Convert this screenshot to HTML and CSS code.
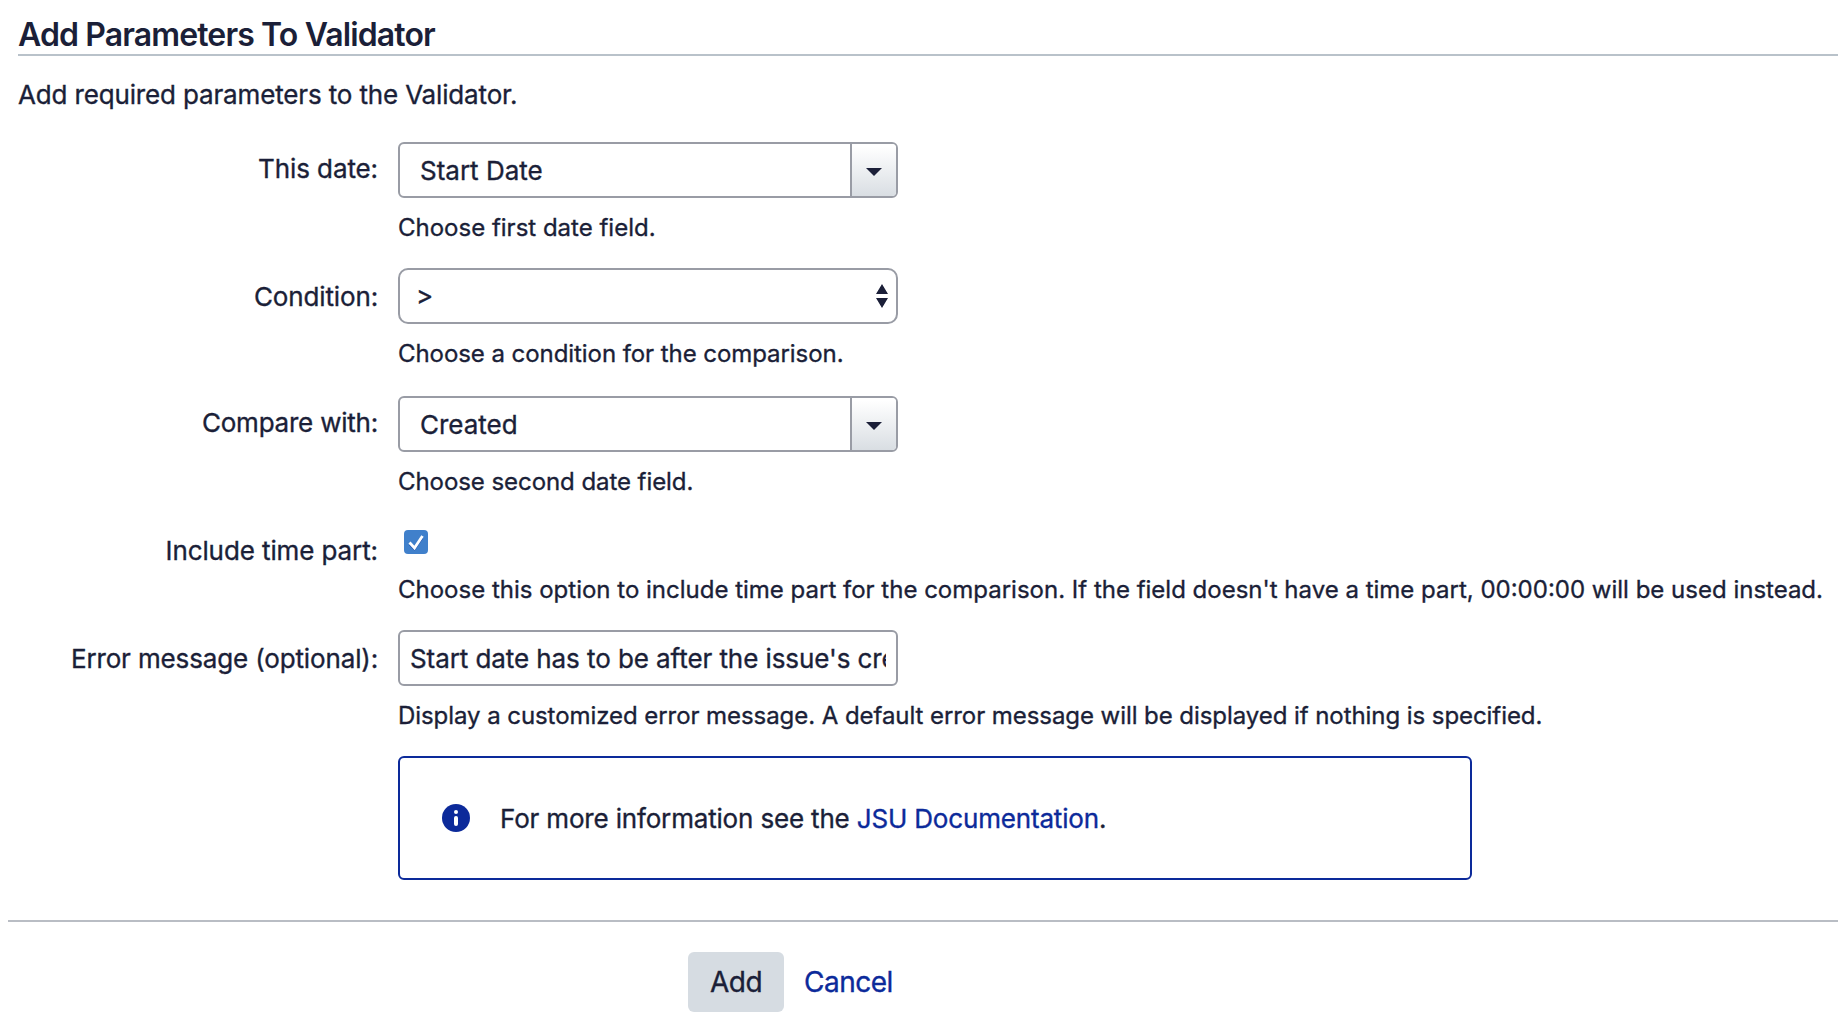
FILE: index.html
```html
<!DOCTYPE html>
<html lang="en">
<head>
<meta charset="utf-8">
<title>Add Parameters To Validator</title>
<link rel="stylesheet" href="styles.css">
</head>
<body>
<form class="page">
  <header class="intro">
    <h1 class="title">Add Parameters To Validator</h1>
    <p class="lead">Add required parameters to the Validator.</p>
  </header>

  <div class="row row-date">
    <div class="label">This date:</div>
    <div class="field">
      <div class="control combo">
        <span class="combo-value">Start Date</span>
        <span class="combo-button"><svg width="16" height="8" viewBox="0 0 16 8"><path d="M0 0h16L8 8z"/></svg></span>
      </div>
      <p class="hint">Choose first date field.</p>
    </div>
  </div>

  <div class="row row-condition">
    <div class="label label-low">Condition:</div>
    <div class="field">
      <div class="control select">
        <span>&gt;</span>
        <svg width="12" height="24" viewBox="0 0 12 24"><path d="M6 0l6 10H0zM0 14h12L6 24z"/></svg>
      </div>
      <p class="hint hint-tight">Choose a condition for the comparison.</p>
    </div>
  </div>

  <div class="row row-compare">
    <div class="label label-compare">Compare with:</div>
    <div class="field">
      <div class="control combo">
        <span class="combo-value">Created</span>
        <span class="combo-button"><svg width="16" height="8" viewBox="0 0 16 8"><path d="M0 0h16L8 8z"/></svg></span>
      </div>
      <p class="hint hint-tight">Choose second date field.</p>
    </div>
  </div>

  <div class="row row-time">
    <div class="label">Include time part:</div>
    <div class="field">
      <span class="checkbox"><svg width="24" height="24" viewBox="0 0 24 24"><path class="tick-shade" d="M5.500 14.500l5 5L18.500 8"/><path class="tick" d="M5.500 12.500l5 5.500L18.500 6"/></svg></span>
      <p class="hint">Choose this option to include time part for the comparison. If the field doesn't have a time part, 00:00:00 will be used instead.</p>
    </div>
  </div>

  <div class="row row-error">
    <div class="label label-low">Error message (optional):</div>
    <div class="field">
      <div class="control text-input"><span class="text-value">Start date has to be after the issue's creation date.</span></div>
      <p class="hint hint-tight">Display a customized error message. A default error message will be displayed if nothing is specified.</p>
    </div>
  </div>

  <div class="info">
    <svg width="28" height="28" viewBox="0 0 28 28"><circle class="info-disc" cx="14" cy="14" r="14"/><circle class="info-mark" cx="14" cy="8" r="2"/><rect class="info-mark" x="12" y="12" width="4" height="10" rx="2"/></svg>
    <p class="info-text">For more information see the <a class="link">JSU Documentation</a>.</p>
  </div>

  <footer class="actions">
    <span class="add">Add</span>
    <a class="cancel link">Cancel</a>
  </footer>
</form>
</body>
</html>
```
FILE: styles.css
```css
* { box-sizing: border-box; }

body {
  margin: 0;
  background: #fff;
  color: #1b1f38;
  font: 26px/36px Inter, "Liberation Sans", sans-serif;
  letter-spacing: -0.1px;
  -webkit-text-stroke: 0.35px currentColor;
  overflow: hidden;
}

h1, p { margin: 0; }
svg { display: block; flex: none; }

.page {
  display: flex;
  flex-direction: column;
  height: 1034px;
}

.intro { height: 142px; padding: 14px 0 0 18px; }

.title {
  height: 42px;
  border-bottom: 2px solid #b9c2ca;
  font-size: 32px;
  font-weight: 600;
  line-height: 42px;
  letter-spacing: -0.88px;
  -webkit-text-stroke: 0;
}

.lead { padding-top: 21px; letter-spacing: -0.15px; }

.row {
  display: grid;
  grid-template-columns: 378px 1fr;
  column-gap: 20px;
}

.row-date { height: 126px; }
.row-condition, .row-compare { height: 128px; }
.row-time { height: 106px; }
.row-error { height: 126px; }

.label { padding-top: 9px; text-align: right; }
.label-low { padding-top: 11px; letter-spacing: -0.14px; }
.label-compare { letter-spacing: -0.22px; }

.control {
  display: flex;
  align-items: center;
  width: 500px;
  height: 56px;
  border: 2px solid #999ca5;
  border-radius: 6px;
  overflow: hidden;
}

.combo-value { flex: 1; padding: 2px 0 0 20px; letter-spacing: 0; }

.combo-button {
  display: flex;
  align-items: center;
  justify-content: center;
  width: 46px;
  height: 52px;
  padding: 3px 0 0;
  border-left: 2px solid #999ca5;
  background: linear-gradient(#fff 5%, #d9dee3);
}

.combo-button svg, .select svg { fill: #1b1f38; }

.select {
  justify-content: space-between;
  padding: 0 8px 0 16px;
  border-radius: 10px;
}

.text-input { padding: 2px 10px 0; }
.text-value { overflow: hidden; white-space: nowrap; letter-spacing: -0.08px; }

.hint {
  padding-top: 15px;
  font-size: 24px;
  line-height: 30px;
  letter-spacing: 0;
  white-space: nowrap;
}

.hint-tight { letter-spacing: -0.065px; }

.checkbox {
  display: block;
  width: 24px;
  height: 24px;
  margin: 6px 0 6px 6px;
  border-radius: 4px;
  background: #4080cb;
}

.tick, .tick-shade { fill: none; stroke: #fff; stroke-width: 2.8; }
.tick-shade { stroke: #1d4da8; stroke-width: 1.5; }

.info {
  display: flex;
  align-items: center;
  gap: 30px;
  width: 1074px;
  height: 124px;
  margin-left: 398px;
  padding-left: 42px;
  border: 2px solid #0c2a9a;
  border-radius: 6px;
}

.info-disc { fill: #0c2a9a; }
.info-mark { fill: #fff; }
.info-text { padding-top: 1px; letter-spacing: -0.17px; }
.link { color: #0c2a9a; }

.actions {
  display: flex;
  align-items: center;
  gap: 20px;
  height: 92px;
  margin: 40px 0 0 8px;
  padding: 30px 0 0 680px;
  border-top: 2px solid #b9bdc4;
  font-size: 28px;
  letter-spacing: -0.5px;
}

.add {
  width: 96px;
  height: 60px;
  border-radius: 6px;
  background: #d6dce2;
  line-height: 60px;
  text-align: center;
}
```
